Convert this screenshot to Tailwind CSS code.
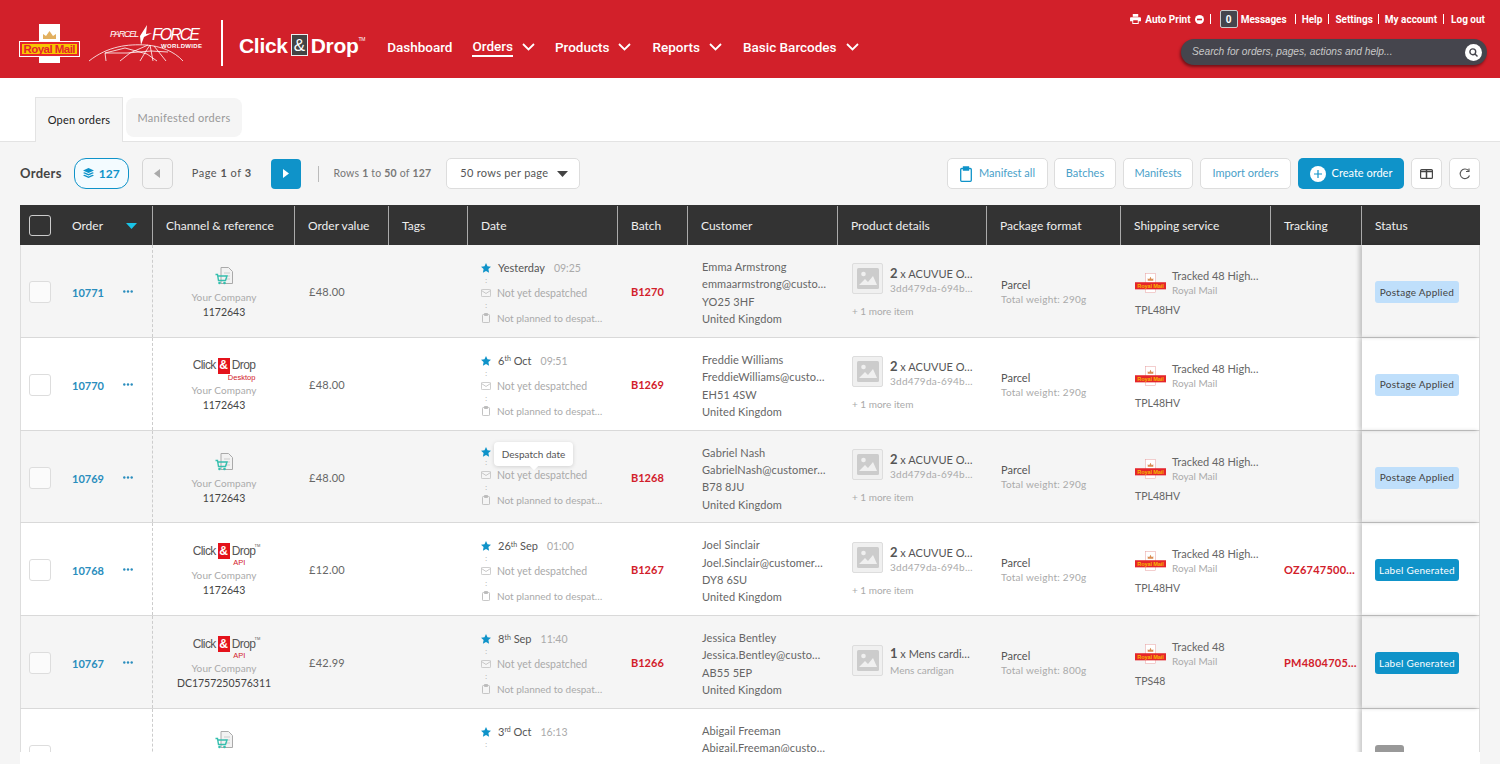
<!DOCTYPE html>
<html lang="en">
<head>
    <meta charset="UTF-8">
    <title>Click &amp; Drop - Orders</title>
    <script src="https://cdn.jsdelivr.net/npm/@tailwindcss/browser@4"></script>
</head>
<body class="h-[764px] overflow-hidden bg-[#f5f5f5] font-[Lato,sans-serif] text-[#555]">
    <!-- Header -->
    <header class="flex h-[78px] bg-[#d2202a] text-white">
        <div class="flex items-start pl-[19px]">
            <svg class="mt-[24px] h-[39px] w-[61px]" viewBox="0 0 61 39">
                <rect x="20" width="21" height="39" fill="#fff"/>
                <path d="M24 15v-5l3 2 3.500-5 3.500 5 3-2v5z" fill="#e2b060"/>
                <rect x=".5" y="17.500" width="60" height="15" fill="#e5252b" stroke="#fff"/>
                <rect x="3" y="20" width="55" height="10" fill="#f7c600"/>
                <text x="30.500" y="29" text-anchor="middle" textLength="52" class="font-[Liberation_Sans] text-[11.500px] font-bold" fill="#e5252b">Royal Mail</text>
            </svg>
            <svg class="mt-[24px] ml-[8px] h-[40px] w-[116px]" viewBox="0 0 116 40" fill="none" stroke="#fff" stroke-width=".8">
                <text x="22" y="13" textLength="29" class="font-[Liberation_Sans] text-[9px] italic" fill="#fff" stroke="none">PARCEL</text>
                <path d="M52 12l7-11-1 9 6-1-8 4-3 8z" fill="#fff" stroke="none"/>
                <text x="64" y="16" textLength="48" class="font-[Liberation_Sans] text-[16px] italic" fill="#fff" stroke="none">FORCE</text>
                <text x="73" y="24" textLength="41" class="font-[Liberation_Sans] text-[6px] font-bold" fill="#fff" stroke="none">WORLDWIDE</text>
                <path d="M1 37C20 22 40 20 58 21c14 1 28 6 37 16M18 37l-1-8 20-5 22 6 10 7M32 37l10-8 18-8M52 37l6-10 4-6M65 37l-3-16M78 37l-12-15M17 29l22 0 24-2 17 1"/>
            </svg>
        </div>
        <div class="mt-[20px] ml-[17px] h-[46px] w-[2px] bg-white"></div>
        <div class="mt-[30px] ml-[16px] flex h-[30px] items-center font-[Liberation_Sans] text-[21px] leading-none font-bold tracking-[-0.3px]">
            <span>Click</span>
            <span class="mx-[3px] flex h-[22px] w-[17px] items-center justify-center border border-[#eee] bg-[#444] text-[17px] font-normal">&amp;</span>
            <span>Drop</span>
            <span class="mb-[12px] text-[5px] font-normal">TM</span>
        </div>
        <nav class="mt-[32px] ml-[22px] flex h-[30px] items-center font-[Roboto,sans-serif] text-[13.500px] font-medium">
            <a>Dashboard</a>
            <a class="ml-[20px] border-b-2 border-white leading-[17px]">Orders</a>
            <svg class="ml-[9px] h-[8px] w-[13px]" viewBox="0 0 13 8" fill="none" stroke="#fff" stroke-width="1.800"><path d="M1 1l5.500 5.500L12 1"/></svg>
            <a class="ml-[20px]">Products</a>
            <svg class="ml-[9px] h-[8px] w-[13px]" viewBox="0 0 13 8" fill="none" stroke="#fff" stroke-width="1.800"><path d="M1 1l5.500 5.500L12 1"/></svg>
            <a class="ml-[21px]">Reports</a>
            <svg class="ml-[9px] h-[8px] w-[13px]" viewBox="0 0 13 8" fill="none" stroke="#fff" stroke-width="1.800"><path d="M1 1l5.500 5.500L12 1"/></svg>
            <a class="ml-[21px]">Basic Barcodes</a>
            <svg class="ml-[9px] h-[8px] w-[13px]" viewBox="0 0 13 8" fill="none" stroke="#fff" stroke-width="1.800"><path d="M1 1l5.500 5.500L12 1"/></svg>
        </nav>
        <div class="ml-auto flex w-[380px] flex-col items-end pr-[13px]">
            <div class="mt-[10px] flex h-[18px] items-center pr-[2px] font-[Roboto,sans-serif] text-[10px] font-bold whitespace-nowrap">
                <svg class="h-[10px] w-[11px]" viewBox="0 0 12 11" fill="#fff"><path d="M3 0h6v3H3zM1 3.500h10a1 1 0 0 1 1 1V8H9.500v3h-7V8H0V4.500a1 1 0 0 1 1-1zM3.500 7v3h5V7z"/></svg>
                <span class="ml-[4px]">Auto Print</span>
                <svg class="ml-[4px] h-[9px] w-[9px]" viewBox="0 0 9 9"><circle cx="4.500" cy="4.500" r="4.500" fill="#fff"/><rect x="2" y="3.700" width="5" height="1.600" fill="#d2202a"/></svg>
                <span class="ml-[6px] h-[10px] w-px bg-white"></span>
                <span class="ml-[9px] flex h-[18px] w-[18px] items-center justify-center rounded-[2px] border border-[#ccc] bg-[#45454d]">0</span>
                <span class="ml-[3px]">Messages</span>
                <span class="ml-[8px] h-[10px] w-px bg-white"></span>
                <span class="ml-[6px]">Help</span>
                <span class="ml-[6px] h-[10px] w-px bg-white"></span>
                <span class="ml-[6px]">Settings</span>
                <span class="ml-[5px] h-[10px] w-px bg-white"></span>
                <span class="ml-[6px]">My account</span>
                <span class="ml-[6px] h-[10px] w-px bg-white"></span>
                <span class="ml-[7px]">Log out</span>
            </div>
            <div class="mt-[11px] flex h-[26px] w-[306px] items-center rounded-full bg-[#45454d] pr-[5px] pl-[11px] shadow-[-1px_2px_3px_rgba(0,0,0,.45)]">
                <span class="font-[Liberation_Sans] text-[10.200px] text-[#c8c8c8] italic">Search for orders, pages, actions and help...</span>
                <span class="ml-auto flex h-[17px] w-[17px] items-center justify-center rounded-full bg-white">
                    <svg class="h-[9px] w-[9px]" viewBox="0 0 9 9" fill="none" stroke="#45454d" stroke-width="1.400"><circle cx="3.800" cy="3.800" r="2.900"/><path d="M6 6l2.500 2.500"/></svg>
                </span>
            </div>
        </div>
    </header>

    <!-- Tabs -->
    <div class="flex h-[64px] items-start gap-[3px] border-b border-[#e3e3e3] bg-white pt-[19px] pl-[35px]">
        <div class="relative flex h-[45px] w-[88px] items-center justify-center border-x border-t border-[#e3e3e3] bg-[#f5f5f5] text-[11px] tracking-[0.2px] text-[#222]">Open orders</div>
        <div class="mt-px flex h-[39px] w-[116px] items-center justify-center rounded-lg bg-[#f5f5f5] pt-px text-[11px] tracking-[0.3px] text-[#999]">Manifested orders</div>
    </div>

    <!-- Toolbar -->
    <div class="flex h-[63px] items-center px-[20px] text-[11px]">
        <span class="text-[13px] font-bold tracking-[0.3px] text-[#444]">Orders</span>
        <span class="ml-[12px] flex h-[31px] w-[55px] items-center justify-center gap-[5px] rounded-xl border border-[#0f93c9] bg-[#f3fbff] text-[12px] font-bold text-[#0f93c9]">
            <svg class="h-[11px] w-[11px]" viewBox="0 0 11 11" fill="#0f93c9"><path d="M5.500 0L11 2.500 5.500 5 0 2.500zM1.500 4.300l4 1.800 4-1.800L11 5 5.500 7.500 0 5zM1.500 6.800l4 1.800 4-1.800 1.500.7L5.500 10 0 7.500z"/></svg>
            127
        </span>
        <span class="ml-[13px] flex h-[31px] w-[31px] items-center justify-center rounded-[5px] border border-[#d5d5d5]">
            <svg class="h-[9px] w-[6px]" viewBox="0 0 6 9" fill="#aaa"><path d="M6 0v9L0 4.500z"/></svg>
        </span>
        <span class="ml-[19px] tracking-[0.5px]">Page <b>1</b> of <b>3</b></span>
        <span class="ml-[19px] flex h-[30px] w-[30px] items-center justify-center rounded-[4px] bg-[#0f93c9]">
            <svg class="h-[9px] w-[6px]" viewBox="0 0 6 9" fill="#fff"><path d="M0 0v9l6-4.500z"/></svg>
        </span>
        <span class="ml-[17px] h-[16px] w-px bg-[#bbb]"></span>
        <span class="ml-[15px] text-[10.500px] tracking-[0.2px] text-[#777]">Rows <b>1</b> to <b>50</b> of <b>127</b></span>
        <span class="ml-[15px] flex h-[31px] w-[134px] items-center rounded-[5px] border border-[#ddd] bg-white pr-[11px] pl-[13px] tracking-[0.3px]">
            50 rows per page
            <svg class="ml-auto h-[6px] w-[11px]" viewBox="0 0 11 6" fill="#444"><path d="M0 0h11L5.500 6z"/></svg>
        </span>
        <div class="ml-auto flex items-center text-[#4a9fc9]">
            <span class="flex h-[31px] w-[101px] items-center justify-center gap-[7px] rounded-[5px] border border-[#ddd] bg-white">
                <svg class="h-[16px] w-[12px]" viewBox="0 0 12 16" fill="none" stroke="#0f93c9" stroke-width="1.300"><rect x=".7" y="2.500" width="10.600" height="12.800" rx="1"/><path d="M3.500 1h5v3h-5z" fill="#0f93c9"/></svg>
                Manifest all
            </span>
            <span class="ml-[6px] flex h-[31px] w-[62px] items-center justify-center rounded-[5px] border border-[#ddd] bg-white">Batches</span>
            <span class="ml-[7px] flex h-[31px] w-[70px] items-center justify-center rounded-[5px] border border-[#ddd] bg-white">Manifests</span>
            <span class="ml-[7px] flex h-[31px] w-[91px] items-center justify-center rounded-[5px] border border-[#ddd] bg-white">Import orders</span>
            <span class="ml-[7px] flex h-[31px] w-[106px] items-center justify-center gap-[6px] rounded-[5px] bg-[#0f93c9] text-white">
                <svg class="h-[16px] w-[16px]" viewBox="0 0 16 16"><circle cx="8" cy="8" r="8" fill="#fff"/><path d="M8 4v8M4 8h8" stroke="#0f93c9" stroke-width="1.200"/></svg>
                Create order
            </span>
            <span class="ml-[7px] flex h-[31px] w-[31px] items-center justify-center rounded-[5px] border border-[#ddd] bg-white">
                <svg class="h-[10px] w-[13px]" viewBox="0 0 13 10" fill="none" stroke="#444" stroke-width="1.200"><rect x=".6" y=".6" width="11.800" height="8.800" rx="1"/><path d="M6.500 1v8M1 2.500h11" stroke-width="1.500"/></svg>
            </span>
            <span class="ml-[7px] flex h-[31px] w-[31px] items-center justify-center rounded-[5px] border border-[#ddd] bg-white">
                <svg class="h-[12px] w-[12px]" viewBox="0 0 12 12" fill="none" stroke="#555" stroke-width="1.100"><path d="M10.500 7.500A4.800 4.800 0 1 1 9.500 2.500"/><path d="M10 .5v3H7" /></svg>
            </span>
        </div>
    </div>

    <!-- Orders table -->
    <div class="mx-[20px] h-[547px] overflow-hidden">
        <div class="grid h-[40px] grid-cols-[133px_142px_94px_79px_150px_70px_150px_149px_134px_150px_91px_118px] bg-[#333] pt-px text-[12px] text-[#eee]">
            <div class="flex items-center border-r border-[#aaa] pl-[9px]">
                <span class="h-[21px] w-[22px] rounded-[3px] border border-[#ccc]"></span>
                <span class="ml-[21px]">Order</span>
                <svg class="ml-[23px] h-[6px] w-[11px]" viewBox="0 0 11 6" fill="#19c3e6"><path d="M0 0h11L5.500 6z"/></svg>
            </div>
            <div class="flex items-center border-r border-[#aaa] pl-[13px]">Channel &amp; reference</div>
            <div class="flex items-center border-r border-[#aaa] pl-[13px]">Order value</div>
            <div class="flex items-center border-r border-[#aaa] pl-[13px]">Tags</div>
            <div class="flex items-center border-r border-[#aaa] pl-[13px]">Date</div>
            <div class="flex items-center border-r border-[#aaa] pl-[13px]">Batch</div>
            <div class="flex items-center border-r border-[#aaa] pl-[13px]">Customer</div>
            <div class="flex items-center border-r border-[#aaa] pl-[13px]">Product details</div>
            <div class="flex items-center border-r border-[#aaa] pl-[13px]">Package format</div>
            <div class="flex items-center border-r border-[#aaa] pl-[13px]">Shipping service</div>
            <div class="flex items-center border-r border-[#aaa] pl-[13px]">Tracking</div>
            <div class="flex items-center pl-[13px]">Status</div>
        </div>
        <div id="rows"></div>
    </div>
    <div class="mx-[20px] h-[12px] bg-white"></div>

    <script>
        // Small logos used in the rows
        const royalMail = `<svg class="h-[22px] w-[31px] shrink-0" viewBox="0 0 61 39">
            <rect x="20.500" y=".5" width="20" height="38" fill="#fff" stroke="#e8a0a0"/>
            <path d="M25 15v-5l3 2 2.500-5 2.500 5 3-2v5z" fill="#d98a50"/>
            <rect y="18" width="61" height="14" fill="#e5252b"/>
            <text x="30.500" y="29" text-anchor="middle" textLength="52" class="font-[Liberation_Sans] text-[11px] font-bold" fill="#f7b500">Royal Mail</text>
        </svg>`;
        const cartIcon = `<svg class="mt-[2px] h-[18px] w-[18px]" viewBox="0 0 18 18" fill="none">
            <path d="M6 .5h7.500l4 4v12H6z" fill="#f2f2f2" stroke="#aaa"/>
            <path d="M9 6h6M10 9h5M10 12h5" stroke="#ccc"/>
            <path d="M.5 7.500h2l1 6h7l1.500-4.500H3" stroke="#35bfae" stroke-width="1.400"/>
            <circle cx="4.500" cy="16" r="1.300" fill="#35bfae"/><circle cx="9.500" cy="16" r="1.300" fill="#35bfae"/>
        </svg>`;
        const clickDrop = (sub) => `<div class="relative flex h-[16px] items-center font-[Liberation_Sans] text-[12px] tracking-[-0.6px] text-[#555]">
            Click<span class="mx-[2px] flex h-[16px] w-[12px] items-center justify-center bg-[#e4121b] font-bold tracking-normal text-white">&amp;</span>Drop
            ${sub === 'API'
                ? '<span class="absolute top-[16px] right-[10px] text-[7.500px] leading-[8px] tracking-normal text-[#d2202a]">API</span><span class="absolute top-0 right-[-5px] text-[4px] leading-[5px] tracking-normal">TM</span>'
                : '<span class="absolute top-[16px] right-0 text-[7.500px] leading-[8px] tracking-normal text-[#d2202a]">Desktop</span>'}
        </div>`;
        const star = '<svg class="h-[10px] w-[10px] shrink-0" viewBox="0 0 10 10" fill="#0f93c9"><path d="M5 0l1.500 3.300 3.500.4-2.600 2.400.7 3.600L5 7.900 1.900 9.700l.7-3.600L0 3.700l3.500-.4z"/></svg>';
        const mail = '<svg class="h-[8px] w-[10px] shrink-0" viewBox="0 0 10 8" fill="none" stroke="#bbb" stroke-width=".8"><rect x=".4" y=".4" width="9.200" height="7.200" rx="1"/><path d="M.5 1.500L5 4.500l4.500-3"/></svg>';
        const clip = '<svg class="h-[10px] w-[10px] shrink-0" viewBox="0 0 10 10" fill="none" stroke="#bbb" stroke-width=".9"><rect x="1.500" y="1.500" width="7" height="8.100" rx=".8"/><path d="M3.500.5h3v2h-3z" fill="#bbb"/></svg>';
        const dots = '<div class="flex h-[11px] w-[10px] items-center justify-center text-[7px] leading-none text-[#aaa]">:</div>';
        const more = '<svg class="mt-[9px] h-[3px] w-[10px]" viewBox="0 0 10 3" fill="#2a8dbd"><circle cx="1.300" cy="1.500" r="1.200"/><circle cx="5" cy="1.500" r="1.200"/><circle cx="8.700" cy="1.500" r="1.200"/></svg>';
        const picture = `<span class="flex h-[31px] w-[31px] shrink-0 items-center justify-center rounded-[2px] border border-[#ddd] bg-[#f0f0f0]">
            <svg class="h-[21px] w-[22px]" viewBox="0 0 22 21"><rect width="22" height="21" rx="1.500" fill="#ccc"/><circle cx="6.500" cy="6" r="2.300" fill="#f0f0f0"/><path d="M2 17l6-6 3 3 5-6 4 9z" fill="#f0f0f0"/></svg>
        </span>`;

        const orders = [
            { id: '10771', channel: cartIcon, ref: '1172643', value: '£48.00', date: 'Yesterday', time: '09:25', batch: 'B1270', name: 'Emma Armstrong', email: 'emmaarmstrong@custo…', post: 'YO25 3HF', status: 'Postage Applied' },
            { id: '10770', channel: clickDrop('Desktop'), ref: '1172643', value: '£48.00', date: '6<sup class="text-[7px]">th</sup> Oct', time: '09:51', batch: 'B1269', name: 'Freddie Williams', email: 'FreddieWilliams@custo…', post: 'EH51 4SW', status: 'Postage Applied' },
            { id: '10769', channel: cartIcon, ref: '1172643', value: '£48.00', date: '', time: '', batch: 'B1268', name: 'Gabriel Nash', email: 'GabrielNash@customer…', post: 'B78 8JU', status: 'Postage Applied', tooltip: true },
            { id: '10768', channel: clickDrop('API'), ref: '1172643', value: '£12.00', date: '26<sup class="text-[7px]">th</sup> Sep', time: '01:00', batch: 'B1267', name: 'Joel Sinclair', email: 'Joel.Sinclair@customer…', post: 'DY8 6SU', tracking: 'OZ6747500…', status: 'Label Generated' },
            { id: '10767', channel: clickDrop('API'), ref: 'DC1757250576311', value: '£42.99', date: '8<sup class="text-[7px]">th</sup> Sep', time: '11:40', batch: 'B1266', name: 'Jessica Bentley', email: 'Jessica.Bentley@custo…', post: 'AB55 5EP', tracking: 'PM4804705…', status: 'Label Generated', single: true },
            { id: '', channel: cartIcon, ref: '', value: '', date: '3<sup class="text-[7px]">rd</sup> Oct', time: '16:13', batch: '', name: 'Abigail Freeman', email: 'Abigail.Freeman@custo…', post: '', status: '', last: true },
        ];

        const product = (o) => o.single ? `
            <div class="flex items-start gap-[7px]">${picture}
                <div class="leading-[17px]"><div class="text-[#555]"><b class="text-[13px]">1</b> x Mens cardi…</div><div class="text-[10px] text-[#aaa]">Mens cardigan</div></div>
            </div>` : `
            <div class="flex items-start gap-[7px]">${picture}
                <div class="pt-[3px] leading-[15px]"><div class="text-[#555]"><b class="text-[13px]">2</b> x ACUVUE O…</div><div class="text-[10px] tracking-[0.25px] text-[#aaa]">3dd479da-694b…</div></div>
            </div>
            <div class="mt-[8px] text-[10px] leading-[14px] text-[#aaa]">+ 1 more item</div>`;

        const badge = (o) => {
            if (o.status === 'Postage Applied') return '<span class="flex h-[22px] w-[84px] items-center justify-center rounded-[3px] bg-[#bfdffb] text-[#444]">Postage Applied</span>';
            if (o.status === 'Label Generated') return '<span class="flex h-[22px] w-[84px] items-center justify-center rounded-[3px] bg-[#0f93c9] text-white">Label Generated</span>';
            return '<span class="h-[22px] w-[29px] rounded-[3px] bg-[#999]"></span>';
        };

        document.getElementById('rows').innerHTML = orders.map((o, i) => `
            <div class="grid h-[92.750px] grid-cols-[133px_142px_94px_79px_150px_70px_150px_149px_134px_150px_91px_118px] border-b border-[#d9d9d9] text-[11px] ${i % 2 ? 'bg-white' : 'bg-[#f5f5f5]'}">
                <div class="flex items-start border-r border-dashed border-[#ccc] pt-[36px] pl-[9px] shadow-[inset_1px_0_0_#ddd]">
                    <span class="h-[22px] w-[22px] rounded-[3px] border border-[#ddd] bg-white/60"></span>
                    <span class="ml-[21px] w-[51px] pt-[4px] text-[11px] font-bold text-[#2a8dbd]">${o.id}</span>
                    ${o.id ? more : ''}
                </div>
                <div class="flex flex-col items-center pt-[20px] leading-[15px]">
                    <div class="flex h-[24px] items-start justify-center">${o.channel}</div>
                    <div class="mt-px text-[10px] tracking-[0.1px] text-[#aaa]">Your Company</div>
                    <div class="text-[10.500px] text-[#444]">${o.ref}</div>
                </div>
                <div class="pt-[39px] pl-[14px] tracking-[0.25px] text-[#666]">${o.value}</div>
                <div></div>
                <div class="relative pt-[16px] pl-[13px] leading-[14px]">
                    <div class="flex items-center gap-[6px]">${star}<span class="ml-px text-[#555]">${o.date}</span><span class="ml-[3px] text-[10.500px] text-[#aaa]">${o.time}</span></div>
                    ${dots}
                    <div class="flex items-center gap-[6px] text-[10.500px] text-[#aaa]">${mail}Not yet despatched</div>
                    ${dots}
                    <div class="flex items-center gap-[6px] text-[10px] text-[#aaa]">${clip}Not planned to despat…</div>
                    ${o.tooltip ? '<div class="absolute top-[11px] left-[26px] flex h-[24px] w-[79px] items-center justify-center rounded-[4px] bg-white text-[10px] text-[#555] shadow-[0_1px_4px_rgba(0,0,0,.15)]">Despatch date<span class="absolute -bottom-[3px] h-[6px] w-[6px] rotate-45 bg-white"></span></div>' : ''}
                </div>
                <div class="pt-[39px] pl-[13px] font-bold text-[#d2202a]">${o.batch}</div>
                <div class="pt-[13px] pl-[14px] leading-[17.400px] tracking-[0.1px] text-[#666]">
                    <div>${o.name}</div><div>${o.email}</div><div>${o.post}</div><div>United Kingdom</div>
                </div>
                <div class="flex flex-col justify-center pl-[14px] text-[11px]">${o.last ? '' : product(o)}</div>
                <div class="flex flex-col justify-center pt-[2px] pl-[14px] leading-[15px]">${o.last ? '' : '<div class="text-[#555]">Parcel</div><div class="text-[10px] tracking-[0.25px] text-[#aaa]">Total weight: ' + (o.single ? '800g' : '290g') + '</div>'}</div>
                <div class="pt-[23px] pl-[14px] leading-[15px]">${o.last ? '' : `
                    <div class="flex items-center gap-[6px]">${royalMail}<div><div class="text-[#666]">${o.single ? 'Tracked 48' : 'Tracked 48 High…'}</div><div class="text-[10px] text-[#aaa]">Royal Mail</div></div></div>
                    <div class="mt-[5px] text-[10.500px] text-[#666]">${o.single ? 'TPS48' : 'TPL48HV'}</div>`}
                </div>
                <div class="pt-[39px] pl-[13px] font-bold tracking-[0.25px] whitespace-nowrap text-[#d2202a]">${o.tracking || ''}</div>
                <div class="relative flex items-start border-r border-[#ddd] pt-[36px] pl-[13px] text-[10px] tracking-[0.25px] shadow-[-3px_0_4px_rgba(0,0,0,.2)]">${badge(o)}</div>
            </div>`).join('');
    </script>
</body>
</html>
